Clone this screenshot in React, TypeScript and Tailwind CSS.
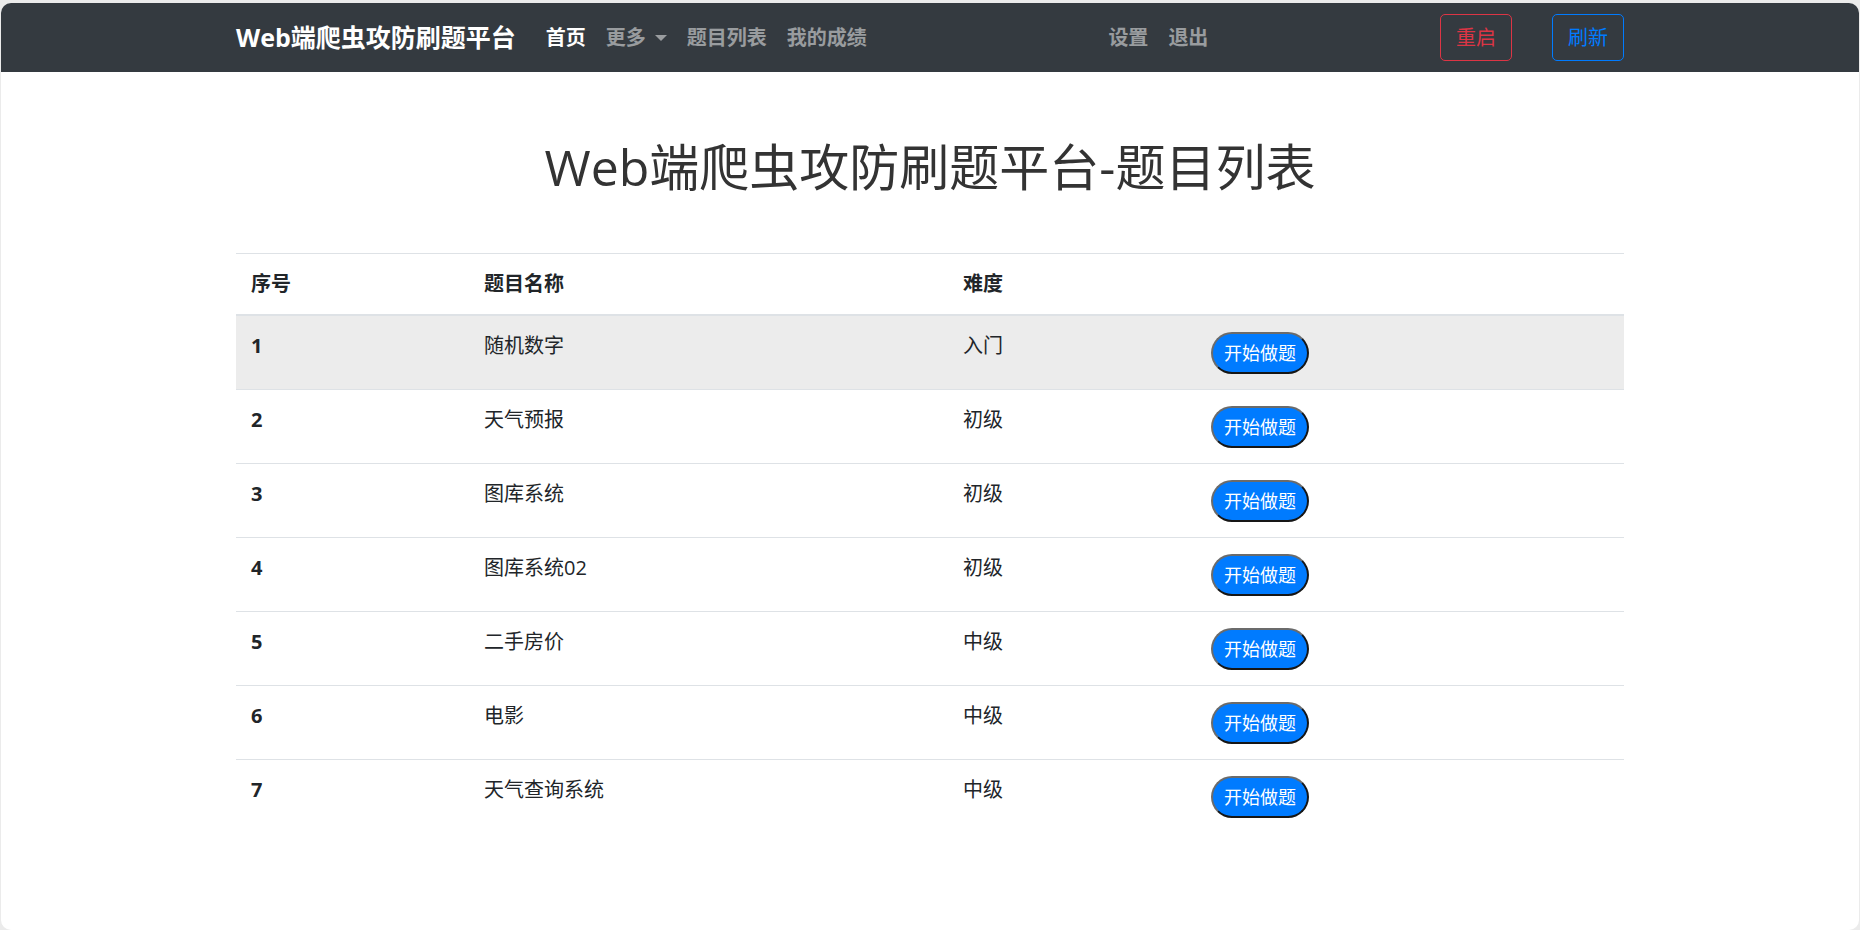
import React from "react";

const rows = [
  { id: 1, name: "随机数字", level: "入门" },
  { id: 2, name: "天气预报", level: "初级" },
  { id: 3, name: "图库系统", level: "初级" },
  { id: 4, name: "图库系统02", level: "初级" },
  { id: 5, name: "二手房价", level: "中级" },
  { id: 6, name: "电影", level: "中级" },
  { id: 7, name: "天气查询系统", level: "中级" },
];

function Navbar() {
  return (
    <nav className="h-[69px] bg-[#343a40]">
      <div className="mx-auto flex h-full w-[1388px] items-center justify-between">
        {/* 左侧：品牌 + 菜单 */}
        <div className="flex items-center">
          <a className="mr-[20px] text-[25px] font-bold leading-[37px] text-white">Web端爬虫攻防刷题平台</a>
          <ul className="flex items-center text-[20px] font-bold leading-[30px]">
            <li className="px-[10px] text-white">首页</li>
            <li className="flex items-center px-[10px] text-white/50">
              更多
              <span className="ml-[9px] h-0 w-0 border-x-[6px] border-t-[6px] border-x-transparent border-t-white/50" />
            </li>
            <li className="px-[10px] text-white/50">题目列表</li>
            <li className="px-[10px] text-white/50">我的成绩</li>
          </ul>
        </div>

        <ul className="flex items-center text-[20px] font-bold leading-[30px] text-white/50">
          <li className="px-[10px]">设置</li>
          <li className="px-[10px]">退出</li>
        </ul>

        <div className="flex items-center gap-[40px]">
          <button className="rounded-[5px] border border-[#dc3545] px-[15px] py-[7.5px] text-[20px] leading-[30px] text-[#dc3545]">
            重启
          </button>
          <button className="rounded-[5px] border border-[#007bff] px-[15px] py-[7.5px] text-[20px] leading-[30px] text-[#007bff]">
            刷新
          </button>
        </div>
      </div>
    </nav>
  );
}

function QuestionTable() {
  return (
    <table className="w-[1388px] border-collapse text-left text-[20px] leading-[30px] text-[#212529]">
      <thead>
        <tr className="border-t border-b-2 border-t-[#dee2e6] border-b-[#dee2e6]">
          <th className="w-[233px] px-[15px] py-[15px] align-top font-bold">序号</th>
          <th className="w-[479px] px-[15px] py-[15px] align-top font-bold">题目名称</th>
          <th className="w-[248px] px-[15px] py-[15px] align-top font-bold">难度</th>
          <th className="px-[15px] py-[15px]" />
        </tr>
      </thead>
      <tbody>
        {rows.map((r, i) => (
          <tr key={r.id} className={`border-t border-[#dee2e6] first:border-t-0 ${i === 0 ? "bg-[#ececec]" : ""}`}>
            <th className="px-[15px] py-[15px] align-top font-bold">{r.id}</th>
            <td className="px-[15px] py-[15px] align-top">{r.name}</td>
            <td className="px-[15px] py-[15px] align-top">{r.level}</td>
            <td className="px-[15px] py-[15px] align-top">
              <button className="mt-[1px] flex h-[42px] items-center rounded-full border-2 border-[#6b6b6b] bg-[#007bff] px-[11px] text-[18px] leading-none text-white [border-style:outset]">
                开始做题
              </button>
            </td>
          </tr>
        ))}
      </tbody>
    </table>
  );
}

export default function App() {
  return (
    <div className="h-[930px] overflow-hidden bg-[#ebebeb] px-px pt-[3px] font-['Open_Sans','Noto_Sans_CJK_SC',sans-serif]">
      <div className="h-[927px] overflow-hidden rounded-[10px] bg-white">
        <Navbar />
        <main className="flex flex-col items-center">
          <h1 className="mt-[65px] mb-[56px] text-[50px] font-normal leading-[60px] text-[#333333]">
            Web端爬虫攻防刷题平台-题目列表
          </h1>
          <QuestionTable />
        </main>
      </div>
    </div>
  );
}
